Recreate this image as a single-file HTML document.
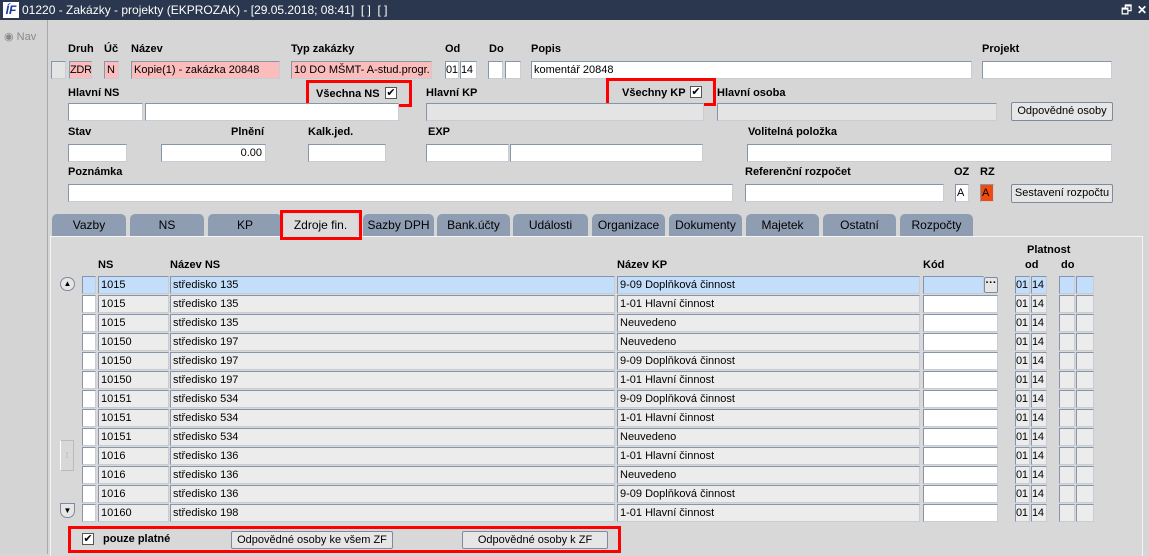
<!DOCTYPE html>
<html><head><meta charset="utf-8"><style>
*{box-sizing:border-box;margin:0;padding:0}
body{width:1149px;height:554px;overflow:hidden;background:#d6d6d6;font-family:"Liberation Sans",sans-serif;font-size:11px;color:#000;position:relative}
div,span{position:absolute}
.tb{left:0;top:0;width:1149px;height:20px;background:#2a374e;color:#fff;font-size:12px;line-height:20px}
.l{font-weight:bold;font-size:11px;white-space:nowrap}
.f{height:18px;border:1px solid #8795ab;border-right-color:#c8ccd4;border-bottom-color:#c8ccd4;background:#fff;line-height:16px;padding-left:2px;white-space:nowrap;overflow:hidden}
.n{padding-left:0;letter-spacing:-0.3px}
.p{background:#fbbcbc}
.g{background:#e4e4e4}
.r{background:#ececec}
.s{background:#c3defa}
.btn{border:1px solid #7d8aa0;background:#e6e6e6;text-align:center;line-height:16px;height:19px;border-radius:2px}
.red{border:3px solid #f00}
.tab{top:214px;height:22px;background:#8f9db3;border-radius:5px 5px 0 0;text-align:center;line-height:22px;font-size:12px}
.ck{width:12px;height:12px;border:1px solid #555;background:#fff;font-size:11px;line-height:10px;text-align:center}
</style></head><body>
<div class="tb"><span style="left:3px;top:2px;width:16px;height:16px;background:#fff;color:#1a3aa0;font-weight:bold;font-style:italic;font-size:12px;line-height:16px;text-align:center">ÍF</span><span style="left:22px;top:0">01220 - Zakázky - projekty (EKPROZAK) - [29.05.2018; 08:41]&nbsp; [ ]&nbsp; [ ]</span><span style="left:1121px;top:0">🗗</span><span style="left:1137px;top:0;font-weight:bold">✕</span></div>
<div style="left:0;top:20px;width:48px;height:534px;background:#d4d4d4;border-right:1px solid #a8a8a8"></div>
<div style="left:4px;top:30px;color:#888;font-size:11px">◉ Nav</div>

<div class="l" style="left:68px;top:43px">Druh</div><div class="l" style="left:104px;top:43px">Úč</div><div class="l" style="left:131px;top:43px">Název</div><div class="l" style="left:291px;top:43px">Typ zakázky</div><div class="l" style="left:445px;top:43px">Od</div><div class="l" style="left:489px;top:43px">Do</div><div class="l" style="left:531px;top:43px">Popis</div><div class="l" style="left:982px;top:43px">Projekt</div>
<div class="f g" style="left:51px;top:61px;width:15px"></div>
<div class="f p n" style="left:69px;top:61px;width:23px">ZDR</div>
<div class="f p" style="left:104px;top:61px;width:15px">N</div>
<div class="f p" style="left:131px;top:61px;width:149px">Kopie(1) - zakázka 20848</div>
<div class="f p" style="left:291px;top:61px;width:141px">10 DO MŠMT- A-stud.progr.</div>
<div class="f n" style="left:445px;top:61px;width:14px">01</div><div class="f n" style="left:460px;top:61px;width:17px">14</div>
<div class="f" style="left:488px;top:61px;width:15px"></div><div class="f" style="left:505px;top:61px;width:16px"></div>
<div class="f" style="left:531px;top:61px;width:441px">komentář 20848</div>
<div class="f" style="left:982px;top:61px;width:130px"></div>

<div class="l" style="left:68px;top:87px">Hlavní NS</div>
<div class="red" style="left:306px;top:80px;width:106px;height:27px"></div>
<div class="l" style="left:316px;top:88px">Všechna NS</div><div class="ck" style="left:385px;top:87px">✔</div>
<div class="l" style="left:426px;top:87px">Hlavní KP</div>
<div class="red" style="left:606px;top:78px;width:110px;height:28px"></div>
<div class="l" style="left:622px;top:87px">Všechny KP</div><div class="ck" style="left:690px;top:86px">✔</div>
<div class="l" style="left:717px;top:87px">Hlavní osoba</div>
<div class="f" style="left:68px;top:103px;width:75px"></div><div class="f" style="left:145px;top:103px;width:254px"></div>
<div class="f g" style="left:426px;top:103px;width:278px"></div><div class="f g" style="left:717px;top:103px;width:280px"></div>
<div class="btn" style="left:1011px;top:102px;width:102px">Odpovědné osoby</div>

<div class="l" style="left:68px;top:126px">Stav</div><div class="l" style="left:231px;top:126px">Plnění</div><div class="l" style="left:308px;top:126px">Kalk.jed.</div><div class="l" style="left:428px;top:126px">EXP</div><div class="l" style="left:748px;top:126px">Volitelná položka</div>
<div class="f" style="left:68px;top:144px;width:59px"></div>
<div class="f" style="left:161px;top:144px;width:105px;text-align:right;padding-right:3px">0.00</div>
<div class="f" style="left:308px;top:144px;width:78px"></div>
<div class="f" style="left:426px;top:144px;width:83px"></div><div class="f" style="left:510px;top:144px;width:193px"></div>
<div class="f" style="left:747px;top:144px;width:365px"></div>

<div class="l" style="left:68px;top:166px">Poznámka</div><div class="l" style="left:745px;top:166px">Referenční rozpočet</div><div class="l" style="left:954px;top:166px">OZ</div><div class="l" style="left:980px;top:166px">RZ</div>
<div class="f" style="left:68px;top:184px;width:665px"></div>
<div class="f" style="left:745px;top:184px;width:199px"></div>
<div class="f" style="left:955px;top:184px;width:14px;padding-left:1px">A</div>
<div class="f" style="left:980px;top:184px;width:14px;background:#f04a10;padding-left:1px">A</div>
<div class="btn" style="left:1011px;top:184px;width:102px">Sestavení rozpočtu</div>

<div style="left:50px;top:236px;width:1093px;height:320px;border:1px solid #f4f4f4;border-bottom:none;background:#d8d8d8"></div>
<div class="tab" style="left:52px;width:74px">Vazby</div>
<div class="tab" style="left:130px;width:74px">NS</div>
<div class="tab" style="left:208px;width:74px">KP</div>
<div class="tab" style="left:284px;width:73px;background:#dcdcdc;height:24px">Zdroje fin.</div>
<div class="red" style="left:280px;top:210px;width:82px;height:30px"></div>
<div class="tab" style="left:363px;width:71px">Sazby DPH</div>
<div class="tab" style="left:437px;width:73px">Bank.účty</div>
<div class="tab" style="left:513px;width:75px">Události</div>
<div class="tab" style="left:592px;width:73px">Organizace</div>
<div class="tab" style="left:669px;width:73px">Dokumenty</div>
<div class="tab" style="left:746px;width:73px">Majetek</div>
<div class="tab" style="left:823px;width:73px">Ostatní</div>
<div class="tab" style="left:900px;width:73px">Rozpočty</div>

<div class="l" style="left:1027px;top:244px">Platnost</div>
<div class="l" style="left:98px;top:259px">NS</div><div class="l" style="left:170px;top:259px">Název NS</div><div class="l" style="left:617px;top:259px">Název KP</div><div class="l" style="left:923px;top:259px">Kód</div><div class="l" style="left:1025px;top:259px">od</div><div class="l" style="left:1061px;top:259px">do</div>

<div class="btn" style="left:60px;top:277px;width:15px;height:14px;border-radius:7px;line-height:12px;font-size:8px">▲</div>
<div style="left:60px;top:440px;width:14px;height:31px;border:1px solid #bbb;border-left-color:#fff;color:#999;font-size:8px;text-align:center;line-height:30px">⁞</div>
<div class="btn" style="left:60px;top:503px;width:15px;height:15px;border-radius:0 0 7px 7px;line-height:13px;font-size:8px">▼</div>

<div style="left:0;top:276px;width:1149px;height:19px"><div class="f s" style="left:82px;width:14px"></div><div class="f s" style="left:98px;width:71px">1015</div><div class="f s" style="left:170px;width:445px">středisko 135</div><div class="f s" style="left:617px;width:303px">9-09 Doplňková činnost</div><div class="f s" style="left:923px;width:61px"></div><div class="btn" style="left:984px;top:1px;width:14px;height:16px;line-height:10px;font-weight:bold">···</div><div class="f s n" style="left:1015px;width:15px">01</div><div class="f s n" style="left:1031px;width:16px">14</div><div class="f s" style="left:1059px;width:16px"></div><div class="f s" style="left:1076px;width:18px"></div></div>
<div style="left:0;top:295px;width:1149px;height:19px"><div class="f" style="left:82px;width:14px"></div><div class="f r" style="left:98px;width:71px">1015</div><div class="f r" style="left:170px;width:445px">středisko 135</div><div class="f r" style="left:617px;width:303px">1-01 Hlavní činnost</div><div class="f" style="left:923px;width:75px"></div><div class="f r n" style="left:1015px;width:15px">01</div><div class="f r n" style="left:1031px;width:16px">14</div><div class="f r" style="left:1059px;width:16px"></div><div class="f r" style="left:1076px;width:18px"></div></div>
<div style="left:0;top:314px;width:1149px;height:19px"><div class="f" style="left:82px;width:14px"></div><div class="f r" style="left:98px;width:71px">1015</div><div class="f r" style="left:170px;width:445px">středisko 135</div><div class="f r" style="left:617px;width:303px">Neuvedeno</div><div class="f" style="left:923px;width:75px"></div><div class="f r n" style="left:1015px;width:15px">01</div><div class="f r n" style="left:1031px;width:16px">14</div><div class="f r" style="left:1059px;width:16px"></div><div class="f r" style="left:1076px;width:18px"></div></div>
<div style="left:0;top:333px;width:1149px;height:19px"><div class="f" style="left:82px;width:14px"></div><div class="f r" style="left:98px;width:71px">10150</div><div class="f r" style="left:170px;width:445px">středisko 197</div><div class="f r" style="left:617px;width:303px">Neuvedeno</div><div class="f" style="left:923px;width:75px"></div><div class="f r n" style="left:1015px;width:15px">01</div><div class="f r n" style="left:1031px;width:16px">14</div><div class="f r" style="left:1059px;width:16px"></div><div class="f r" style="left:1076px;width:18px"></div></div>
<div style="left:0;top:352px;width:1149px;height:19px"><div class="f" style="left:82px;width:14px"></div><div class="f r" style="left:98px;width:71px">10150</div><div class="f r" style="left:170px;width:445px">středisko 197</div><div class="f r" style="left:617px;width:303px">9-09 Doplňková činnost</div><div class="f" style="left:923px;width:75px"></div><div class="f r n" style="left:1015px;width:15px">01</div><div class="f r n" style="left:1031px;width:16px">14</div><div class="f r" style="left:1059px;width:16px"></div><div class="f r" style="left:1076px;width:18px"></div></div>
<div style="left:0;top:371px;width:1149px;height:19px"><div class="f" style="left:82px;width:14px"></div><div class="f r" style="left:98px;width:71px">10150</div><div class="f r" style="left:170px;width:445px">středisko 197</div><div class="f r" style="left:617px;width:303px">1-01 Hlavní činnost</div><div class="f" style="left:923px;width:75px"></div><div class="f r n" style="left:1015px;width:15px">01</div><div class="f r n" style="left:1031px;width:16px">14</div><div class="f r" style="left:1059px;width:16px"></div><div class="f r" style="left:1076px;width:18px"></div></div>
<div style="left:0;top:390px;width:1149px;height:19px"><div class="f" style="left:82px;width:14px"></div><div class="f r" style="left:98px;width:71px">10151</div><div class="f r" style="left:170px;width:445px">středisko 534</div><div class="f r" style="left:617px;width:303px">9-09 Doplňková činnost</div><div class="f" style="left:923px;width:75px"></div><div class="f r n" style="left:1015px;width:15px">01</div><div class="f r n" style="left:1031px;width:16px">14</div><div class="f r" style="left:1059px;width:16px"></div><div class="f r" style="left:1076px;width:18px"></div></div>
<div style="left:0;top:409px;width:1149px;height:19px"><div class="f" style="left:82px;width:14px"></div><div class="f r" style="left:98px;width:71px">10151</div><div class="f r" style="left:170px;width:445px">středisko 534</div><div class="f r" style="left:617px;width:303px">1-01 Hlavní činnost</div><div class="f" style="left:923px;width:75px"></div><div class="f r n" style="left:1015px;width:15px">01</div><div class="f r n" style="left:1031px;width:16px">14</div><div class="f r" style="left:1059px;width:16px"></div><div class="f r" style="left:1076px;width:18px"></div></div>
<div style="left:0;top:428px;width:1149px;height:19px"><div class="f" style="left:82px;width:14px"></div><div class="f r" style="left:98px;width:71px">10151</div><div class="f r" style="left:170px;width:445px">středisko 534</div><div class="f r" style="left:617px;width:303px">Neuvedeno</div><div class="f" style="left:923px;width:75px"></div><div class="f r n" style="left:1015px;width:15px">01</div><div class="f r n" style="left:1031px;width:16px">14</div><div class="f r" style="left:1059px;width:16px"></div><div class="f r" style="left:1076px;width:18px"></div></div>
<div style="left:0;top:447px;width:1149px;height:19px"><div class="f" style="left:82px;width:14px"></div><div class="f r" style="left:98px;width:71px">1016</div><div class="f r" style="left:170px;width:445px">středisko 136</div><div class="f r" style="left:617px;width:303px">1-01 Hlavní činnost</div><div class="f" style="left:923px;width:75px"></div><div class="f r n" style="left:1015px;width:15px">01</div><div class="f r n" style="left:1031px;width:16px">14</div><div class="f r" style="left:1059px;width:16px"></div><div class="f r" style="left:1076px;width:18px"></div></div>
<div style="left:0;top:466px;width:1149px;height:19px"><div class="f" style="left:82px;width:14px"></div><div class="f r" style="left:98px;width:71px">1016</div><div class="f r" style="left:170px;width:445px">středisko 136</div><div class="f r" style="left:617px;width:303px">Neuvedeno</div><div class="f" style="left:923px;width:75px"></div><div class="f r n" style="left:1015px;width:15px">01</div><div class="f r n" style="left:1031px;width:16px">14</div><div class="f r" style="left:1059px;width:16px"></div><div class="f r" style="left:1076px;width:18px"></div></div>
<div style="left:0;top:485px;width:1149px;height:19px"><div class="f" style="left:82px;width:14px"></div><div class="f r" style="left:98px;width:71px">1016</div><div class="f r" style="left:170px;width:445px">středisko 136</div><div class="f r" style="left:617px;width:303px">9-09 Doplňková činnost</div><div class="f" style="left:923px;width:75px"></div><div class="f r n" style="left:1015px;width:15px">01</div><div class="f r n" style="left:1031px;width:16px">14</div><div class="f r" style="left:1059px;width:16px"></div><div class="f r" style="left:1076px;width:18px"></div></div>
<div style="left:0;top:504px;width:1149px;height:19px"><div class="f" style="left:82px;width:14px"></div><div class="f r" style="left:98px;width:71px">10160</div><div class="f r" style="left:170px;width:445px">středisko 198</div><div class="f r" style="left:617px;width:303px">1-01 Hlavní činnost</div><div class="f" style="left:923px;width:75px"></div><div class="f r n" style="left:1015px;width:15px">01</div><div class="f r n" style="left:1031px;width:16px">14</div><div class="f r" style="left:1059px;width:16px"></div><div class="f r" style="left:1076px;width:18px"></div></div>

<div class="red" style="left:68px;top:526px;width:553px;height:27px"></div>
<div class="ck" style="left:82px;top:533px">✔</div>
<div class="l" style="left:103px;top:533px">pouze platné</div>
<div class="btn" style="left:231px;top:531px;width:162px;height:18px;line-height:16px">Odpovědné osoby ke všem ZF</div>
<div class="btn" style="left:462px;top:531px;width:146px;height:18px;line-height:16px">Odpovědné osoby k ZF</div>
</body></html>
